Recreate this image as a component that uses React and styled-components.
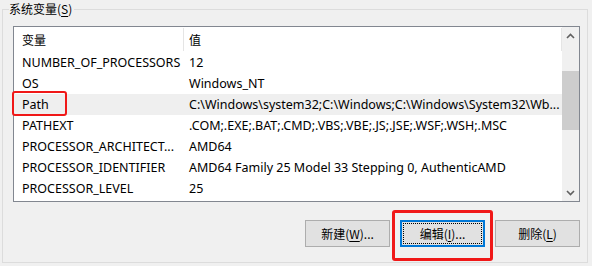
import React from "react";
import styled, { createGlobalStyle } from "styled-components";

const GlobalStyle = createGlobalStyle`
  html, body { margin: 0; padding: 0; background: #f0f0f0; }
  body {
    font-family: "Noto Sans", "Noto Sans CJK SC", sans-serif;
    font-size: 12px;
    color: #000;
  }
`;

const Page = styled.div`
  width: 592px;
  height: 266px;
  box-sizing: border-box;
  padding: 0 4px 0 2px;
  overflow: hidden;
`;

const Group = styled.fieldset`
  margin: 0;
  padding: 8px 8px 15px 10px;
  border: 1px solid #dcdcdc;
  min-width: 0;
`;

const Legend = styled.legend`
  margin-left: -4px;
  padding: 0 2px 0 0;
  height: 18px;
  line-height: 18px;
  font-size: 12px;
  font-family: "Noto Sans CJK SC", "Noto Sans", sans-serif;
`;

const Key = styled.span`
  text-decoration: underline;
  text-underline-offset: 2px;
`;

const ListBox = styled.div`
  display: flex;
  width: 567px;
  height: 176px;
  box-sizing: border-box;
  border: 1px solid #828790;
  background: #fff;
`;

const Table = styled.div`
  flex: 1;
  display: flex;
  flex-direction: column;
  min-width: 0;
`;

const Header = styled.div`
  display: grid;
  grid-template-columns: 170px 1fr;
  height: 25px;
  align-items: stretch;
`;

const HeadCell = styled.div`
  display: flex;
  align-items: center;
  padding-left: ${(p) => (p.$first ? "8px" : "5px")};
  border-right: 1px solid #e5e5e5;
  margin: 1px 0 1px;
  font-family: "Noto Sans CJK SC", "Noto Sans", sans-serif;
`;

const Row = styled.div`
  display: grid;
  grid-template-columns: 170px 1fr;
  height: 21px;
  align-items: center;
  background: ${(p) => (p.$hl ? "#efefef" : "transparent")};
`;

const Cell = styled.div`
  position: relative;
  padding-left: ${(p) => (p.$first ? "8px" : "5px")};
  white-space: nowrap;
  overflow: visible;
  line-height: 21px;
  font-size: 12.5px;
`;

const PathMark = styled.div`
  position: absolute;
  left: -2px;
  top: -3px;
  width: 55px;
  height: 25px;
  box-sizing: border-box;
  border: 2px solid #f01818;
  border-radius: 3px;
  pointer-events: none;
`;

const ScrollBar = styled.div`
  width: 17px;
  display: flex;
  flex-direction: column;
  background: #f0f0f0;
`;

const Arrow = styled.div`
  height: 17px;
  display: flex;
  align-items: center;
  justify-content: center;
`;

const Track = styled.div`
  flex: 1;
  display: flex;
  flex-direction: column;
  padding-top: ${(p) => p.$offset}px;
`;

const Thumb = styled.div`
  height: ${(p) => p.$size}px;
  background: #cdcdcd;
`;

const Buttons = styled.div`
  display: flex;
  justify-content: flex-end;
  gap: 10px;
  width: 567px;
  margin-top: 18px;
`;

const ButtonWrap = styled.div`
  position: relative;
`;

const Button = styled.button`
  position: relative;
  width: 85px;
  height: 27px;
  box-sizing: border-box;
  margin: 0;
  padding: 0;
  background: #e1e1e1;
  border: ${(p) => (p.$focus ? "2px solid #0078d7" : "1px solid #adadad")};
  font-family: "Noto Sans CJK SC", "Noto Sans", sans-serif;
  font-size: 12px;
  color: #000;
  display: flex;
  align-items: center;
  justify-content: center;
  &::after {
    content: "";
    display: ${(p) => (p.$focus ? "block" : "none")};
    position: absolute;
    inset: 1px;
    border: 1px dotted #000;
  }
`;

const EditMark = styled.div`
  position: absolute;
  left: -8px;
  top: -10px;
  width: 101px;
  height: 51px;
  box-sizing: border-box;
  border: 3px solid #f01818;
  border-radius: 3px;
  pointer-events: none;
`;

const Chevron = ({ up }) => (
  <svg width="9" height="6" viewBox="0 0 9 6">
    <path
      d={up ? "M1 5 L4.5 1.5 L8 5" : "M1 1 L4.5 4.5 L8 1"}
      fill="none"
      stroke="#606060"
      strokeWidth="1.6"
    />
  </svg>
);

const rows = [
  ["NUMBER_OF_PROCESSORS", "12"],
  ["OS", "Windows_NT"],
  ["Path", "C:\\Windows\\system32;C:\\Windows;C:\\Windows\\System32\\Wb..."],
  ["PATHEXT", ".COM;.EXE;.BAT;.CMD;.VBS;.VBE;.JS;.JSE;.WSF;.WSH;.MSC"],
  ["PROCESSOR_ARCHITECT...", "AMD64"],
  ["PROCESSOR_IDENTIFIER", "AMD64 Family 25 Model 33 Stepping 0, AuthenticAMD"],
  ["PROCESSOR_LEVEL", "25"],
];

export default function App() {
  return (
    <>
      <GlobalStyle />
      <Page>
        <Group>
          <Legend>
            系统变量(<Key>S</Key>)
          </Legend>
          <ListBox>
            <Table>
              <Header>
                <HeadCell $first>变量</HeadCell>
                <HeadCell>值</HeadCell>
              </Header>
              {rows.map(([k, v]) => (
                <Row key={k} $hl={k === "Path"}>
                  <Cell $first>
                    {k}
                    {k === "Path" && <PathMark />}
                  </Cell>
                  <Cell>{v}</Cell>
                </Row>
              ))}
            </Table>
            <ScrollBar>
              <Arrow>
                <Chevron up />
              </Arrow>
              <Track $offset={27}>
                <Thumb $size={59} />
              </Track>
              <Arrow>
                <Chevron />
              </Arrow>
            </ScrollBar>
          </ListBox>
          <Buttons>
            <Button>
              新建(<Key>W</Key>)...
            </Button>
            <ButtonWrap>
              <Button $focus>
                编辑(<Key>I</Key>)...
              </Button>
              <EditMark />
            </ButtonWrap>
            <Button>
              删除(<Key>L</Key>)
            </Button>
          </Buttons>
        </Group>
      </Page>
    </>
  );
}
